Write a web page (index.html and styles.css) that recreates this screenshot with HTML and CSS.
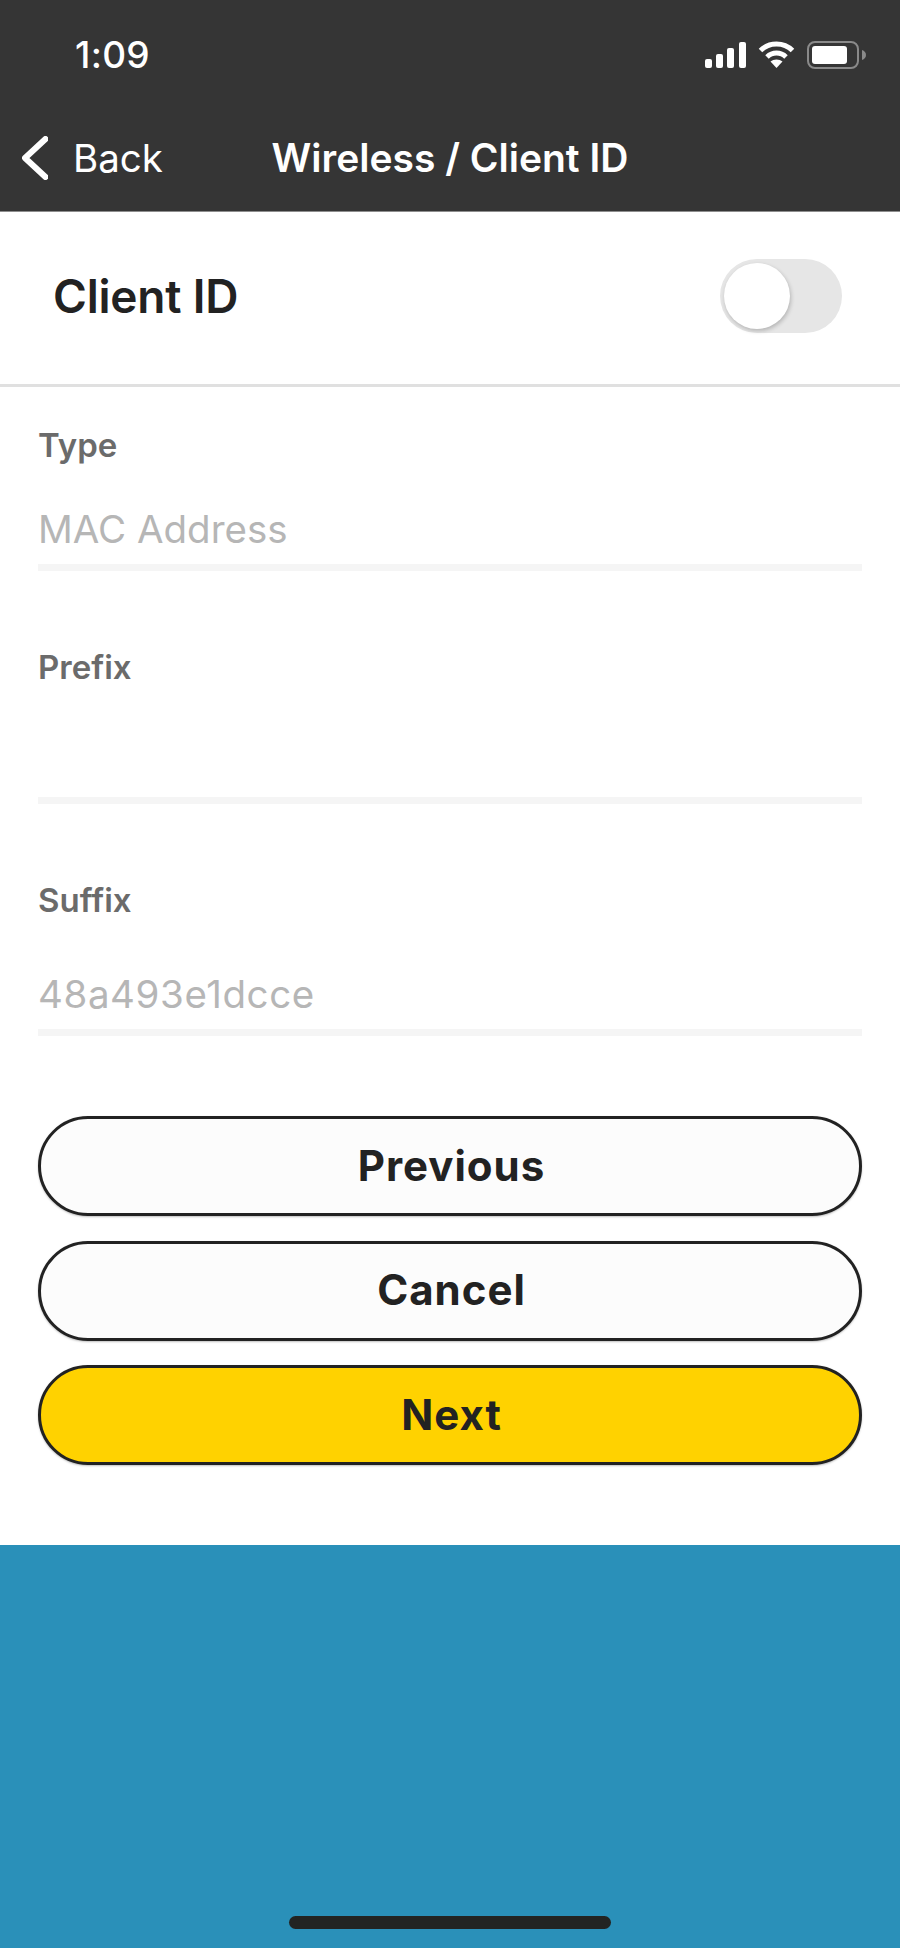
FILE: index.html
```html
<!DOCTYPE html>
<html lang="en">
<head>
<meta charset="utf-8">
<title>Wireless / Client ID</title>
<link rel="stylesheet" href="styles.css">
</head>
<body>
<div class="screen">
  <header class="header">
    <div class="status">
      <span class="time">1:09</span>
      <div class="status-icons">
        <svg class="signal" width="41" height="26" viewBox="0 0 41 26"><rect x="0" y="17" width="7" height="9" rx="2"/><rect x="11" y="12" width="7" height="14" rx="2"/><rect x="22" y="6" width="7" height="20" rx="2"/><rect x="34" y="0" width="7" height="26" rx="2"/></svg>
        <svg class="wifi" width="37" height="27" viewBox="0 0 37 27"><path d="M2.5 9.5C6.8 5.3 12.4 3 18.5 3s11.7 2.3 16 6.5" /><path d="M9 16c2.600-2.500 5.900-3.900 9.500-3.900S25.400 13.500 28 16"/><path class="wifi-dot" d="M18.500 27l-6-6.500c1.600-1.300 3.700-2 6-2s4.400.7 6 2z"/></svg>
        <svg class="battery" width="59" height="28" viewBox="0 0 59 28"><rect class="battery-case" x="1" y="1" width="50" height="26" rx="7"/><rect class="battery-fill" x="5" y="5" width="35" height="18" rx="3"/><path class="battery-nub" d="M55 9c2.500.8 4 2.700 4 5s-1.500 4.200-4 5z"/></svg>
      </div>
    </div>
    <nav class="nav">
      <div class="back">
        <svg class="chevron" width="26" height="44" viewBox="0 0 26 44"><path d="M23.500 3 3 22l20.500 19"/></svg>
        <span>Back</span>
      </div>
      <h1 class="title">Wireless / Client ID</h1>
    </nav>
  </header>

  <main class="content">
    <section class="toggle-row">
      <h2 class="toggle-label">Client ID</h2>
      <div class="switch"><div class="knob"></div></div>
    </section>

    <section class="form">
      <div class="field field-type">
        <div class="field-label">Type</div>
        <div class="field-value">MAC Address</div>
      </div>
      <div class="field field-prefix">
        <div class="field-label">Prefix</div>
        <div class="field-value">&nbsp;</div>
      </div>
      <div class="field field-suffix">
        <div class="field-label">Suffix</div>
        <div class="field-value">48a493e1dcce</div>
      </div>
    </section>

    <section class="actions">
      <button class="btn">Previous</button>
      <button class="btn">Cancel</button>
      <button class="btn btn-primary">Next</button>
    </section>
  </main>

  <footer class="footer"><div class="home-bar"></div></footer>
</div>
</body>
</html>
```

FILE: styles.css
```css
* { box-sizing: border-box; }
html, body { margin: 0; padding: 0; }
body { font-family: Inter, "Liberation Sans", sans-serif; background: #fff; color: #222; }
.screen { width: 900px; height: 1948px; display: flex; flex-direction: column; overflow: hidden; }

.header { height: 212px; background: #353535; color: #fff; border-bottom: 1px solid #8e8e8e; flex: none; }
.status { height: 108px; display: flex; justify-content: space-between; align-items: flex-start; padding: 41px 34px 0 75px; }
.time { font-size: 37px; line-height: 27px; font-weight: 500; letter-spacing: 0.3px; }
.status-icons { display: flex; align-items: flex-start; gap: 12px; }
.signal { fill: #fff; margin-top: 1px; }
.wifi path { fill: none; stroke: #fff; stroke-width: 5; }
.wifi .wifi-dot { fill: #fff; stroke: none; }
.battery-case { fill: none; stroke: #8a8a8a; stroke-width: 2; }
.battery-fill { fill: #fff; }
.battery-nub { fill: #8a8a8a; }

.nav { height: 103px; display: grid; grid-template-columns: 1fr auto 1fr; align-items: center; padding: 0 22px 3px; }
.back { display: flex; align-items: center; gap: 25px; font-size: 38.500px; font-weight: 400; }
.chevron { fill: none; stroke: #fff; stroke-width: 6; stroke-linecap: round; stroke-linejoin: round; }
.title { grid-column: 2; margin: 0; font-size: 39px; font-weight: 600; line-height: 46px; white-space: nowrap; }

.content { flex: 1; display: flex; flex-direction: column; background: #fff; }
.toggle-row { height: 175px; display: flex; justify-content: space-between; align-items: center; padding: 0 58px 0 53px; border-bottom: 3px solid #e0e0e0; }
.toggle-label { margin: 0 0 4px; font-size: 46px; font-weight: 600; color: #222; letter-spacing: -0.2px; }
.switch { width: 122px; height: 74px; margin-bottom: 4px; border-radius: 37px; background: #e6e6e6; padding: 4px; }
.knob { width: 66px; height: 66px; border-radius: 50%; background: #fff; box-shadow: 1px 2px 4px rgba(0,0,0,0.22); }

.form { display: flex; flex-direction: column; padding: 0 38px; }
.field { border-bottom: 7px solid #f5f5f5; padding-top: 78px; height: 233px; }
.field-label { font-size: 33px; line-height: 36px; font-weight: 600; color: #6b6b6b; }
.field-value { margin-top: 35px; font-size: 38.500px; line-height: 46px; color: #b6b6b6; }
.field-type { height: 184px; padding-top: 40px; }
.field-type .field-value { margin-top: 43px; }
.field-suffix { height: 232px; }
.field-suffix .field-value { margin-top: 53px; letter-spacing: 0.6px; }

.actions { display: flex; flex-direction: column; gap: 24.500px; padding: 80px 38px 0; }
.btn { height: 100px; border: 3px solid #222; border-radius: 50px; background: #fcfcfc; color: #222; font-family: inherit; font-size: 42px; font-weight: 700; letter-spacing: 1px; padding: 0 0 2px 3px; box-shadow: 0 1px 2px rgba(0,0,0,0.25); }
.btn-primary { background: #ffd200; }

.footer { height: 403px; flex: none; background: #2a90b9; display: flex; justify-content: center; align-items: flex-end; padding-bottom: 19px; }
.home-bar { width: 322px; height: 13px; border-radius: 7px; background: #222422; }
```
